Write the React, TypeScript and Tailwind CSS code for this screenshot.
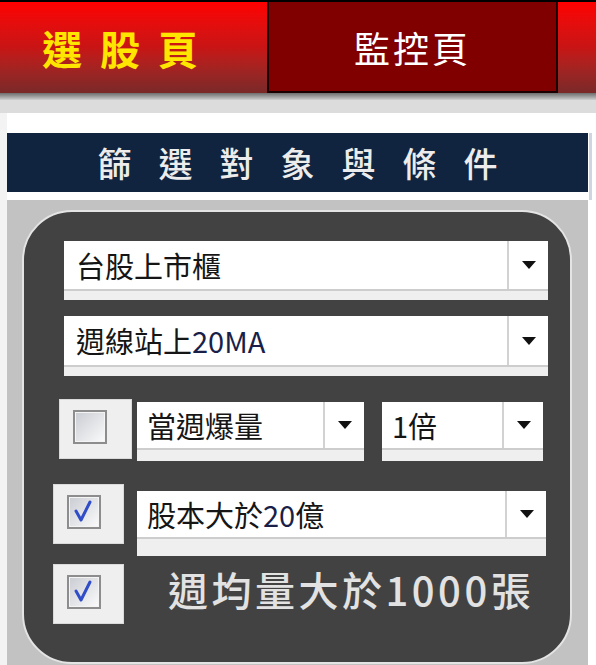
import React from "react";

function Arrow() {
  return (
    <svg width="14" height="8" viewBox="0 0 14 8">
      <polygon points="0,0 14,0 7,8" fill="#111" />
    </svg>
  );
}

function Sel({
  text,
  wrap,
  white,
  strip,
  pad,
}: {
  text: React.ReactNode;
  wrap: string;
  white: string;
  strip: string;
  pad: string;
}) {
  return (
    <div className={`flex flex-col ${wrap}`}>
      <div className={`flex bg-white ${white}`}>
        <div
          className={`flex flex-1 items-center text-[29px] leading-none text-[#151515] ${pad}`}
        >
          {text}
        </div>
        <div className="flex w-[41px] items-center justify-center border-l-2 border-[#d2d2d2]">
          <Arrow />
        </div>
      </div>
      <div className={`border-t-2 border-[#cdcdcd] bg-[#efefef] ${strip}`} />
    </div>
  );
}

function Check({ checked, box }: { checked: boolean; box: string }) {
  return (
    <div className={`h-[60px] border border-[#dadada] bg-[#efefef] pl-[13px] pt-[10px] ${box}`}>
      <div className="relative h-[34px] w-[34px] border-2 border-[#8d8d8d] bg-linear-to-br from-[#c9ccd2] to-[#fbfbfb]">
        <div className="absolute inset-0 border border-[#f4f4f4]" />
        {checked && (
          <svg className="absolute inset-0" width="30" height="30" viewBox="0 0 30 30">
            <path
              d="M7 14 L12 23 L21 5"
              fill="none"
              stroke="#2f4dc8"
              strokeWidth="3"
              strokeLinecap="round"
              strokeLinejoin="round"
            />
          </svg>
        )}
      </div>
    </div>
  );
}

export default function App() {
  return (
    <div className="relative h-[665px] w-[596px] overflow-hidden bg-white font-['Noto_Sans_CJK_TC','Liberation_Sans',sans-serif]">
      {/* top tab bar */}
      <div className="flex h-[93px] border-t-2 border-black">
        <div className="flex w-[267px] items-center bg-linear-to-b from-[#ff0000] via-[#c81414] to-[#7a2828] pl-[42px]">
          <span className="text-[40px] font-bold leading-none tracking-[18px] text-[#ffe600]">
            選股頁
          </span>
        </div>
        <div className="flex w-[291px] items-center justify-center border-2 border-t-0 border-[#1a0000] bg-[#800000]">
          <span className="text-[36px] leading-none tracking-[3px] text-white">監控頁</span>
        </div>
        <div className="flex-1 bg-linear-to-b from-[#ff0000] via-[#c81414] to-[#7a2828]" />
      </div>
      <div className="h-[7px] bg-linear-to-b from-[#6e6e6e] to-[#cfcfcf]" />
      <div className="h-[13px] bg-[#dcdcdc]" />

      {/* content */}
      <div className="flex h-[552px]">
        <div className="w-[7px] bg-[#f3f3f3]" />
        <div className="flex w-[581px] flex-col pt-[20px]">
          <div className="flex h-[59px] items-center justify-center bg-[#10233f] pl-[27px]">
            <span className="text-[34px] font-medium leading-none tracking-[27px] text-[#ececec]">
              篩選對象與條件
            </span>
          </div>
          <div className="h-[8px] bg-white" />
          <div className="flex-1 bg-[#c2c2c2] pl-[15px] pr-[16px] pt-[10px]">
            <div className="h-[454px] w-[550px] rounded-[50px] border-2 border-[#e4e4e4] bg-[#424242] pt-[29px]">
              <Sel
                text="台股上市櫃"
                wrap="ml-[40px] w-[484px]"
                white="h-[48px]"
                strip="h-[11px]"
                pad="pl-[12px]"
              />
              <Sel
                text={
                  <>
                    週線站上<span className="text-[#1a1f4a]">20MA</span>
                  </>
                }
                wrap="ml-[40px] mt-[16px] w-[484px]"
                white="h-[49px]"
                strip="h-[11px]"
                pad="pl-[12px]"
              />
              <div className="mt-[23px] flex items-start">
                <Check checked={false} box="ml-[35px] w-[73px]" />
                <Sel
                  text="當週爆量"
                  wrap="ml-[5px] mt-[3px] w-[227px]"
                  white="h-[46px]"
                  strip="h-[13px]"
                  pad="pl-[10px]"
                />
                <Sel
                  text="1倍"
                  wrap="ml-[18px] mt-[3px] w-[161px]"
                  white="h-[46px]"
                  strip="h-[13px]"
                  pad="pl-[10px]"
                />
              </div>
              <div className="mt-[23px] flex items-start">
                <Check checked={true} box="ml-[29px] w-[71px]" />
                <Sel
                  text={
                    <>
                      股本大於<span className="text-[#1a1f4a]">20</span>億
                    </>
                  }
                  wrap="ml-[13px] mt-[7px] w-[409px]"
                  white="h-[46px]"
                  strip="h-[19px]"
                  pad="pl-[10px]"
                />
              </div>
              <div className="mt-[8px] flex items-center">
                <Check checked={true} box="ml-[29px] w-[71px]" />
                <span className="mb-[10px] ml-[44px] text-[40px] font-medium leading-none tracking-[3.5px] text-[#e2e2e2]">
                  週均量大於1000張
                </span>
              </div>
            </div>
          </div>
        </div>
        <div className="flex w-[8px] flex-col pt-[20px]">
          <div className="ml-[1px] h-[67px] w-[3px] bg-[#cfd6e2]" />
        </div>
      </div>
    </div>
  );
}
